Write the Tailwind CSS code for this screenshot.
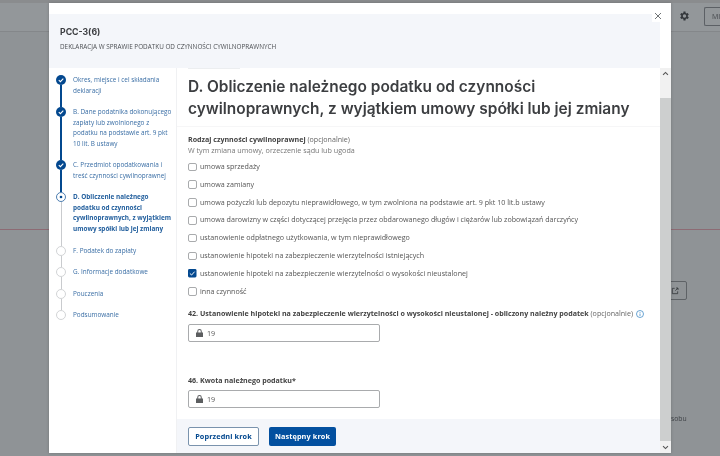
<!doctype html>
<html lang="pl">
<head>
<meta charset="utf-8">
<script src="https://cdn.jsdelivr.net/npm/@tailwindcss/browser@4"></script>
</head>
<body class="m-0 overflow-hidden bg-[#8f9396]">
<div class="relative h-[456px] w-[720px] overflow-hidden bg-[#8f9396] font-['Open_Sans',sans-serif] blur-[0.3px]">
  <!-- dimmed page behind the dialog -->
  <div class="h-[3px] bg-[#8a8c8e]"></div>
  <div class="flex h-[29px] items-start justify-end border-b border-[#84878a] bg-[#93979a] pt-[4px]">
    <svg class="mr-[14px] mt-[3px] size-[12px]" viewBox="0 0 24 24" fill="#33373b"><path d="M19.4 13a7.6 7.6 0 0 0 0-2l2.1-1.6-2-3.5-2.5 1a7.6 7.6 0 0 0-1.7-1L15 3.2h-4l-.4 2.7a7.6 7.6 0 0 0-1.7 1l-2.5-1-2 3.5L6.5 11a7.6 7.6 0 0 0 0 2l-2.1 1.6 2 3.5 2.5-1a7.6 7.6 0 0 0 1.7 1l.4 2.7h4l.4-2.7a7.6 7.6 0 0 0 1.7-1l2.5 1 2-3.5zM13 15.5a3.5 3.5 0 1 1 0-7 3.5 3.5 0 0 1 0 7z"/></svg>
    <div class="h-[19px] w-[16px] overflow-hidden rounded-l-[2px] border border-r-0 border-[#5c6065] pl-[7px] text-[7px] leading-[17px] text-[#44484c]">MI</div>
  </div>
  <div class="absolute left-0 top-[229px] h-px w-full bg-[#8d6b74]"></div>
  <div class="absolute left-[660px] top-[281px] flex h-[19px] w-[27px] items-center justify-end rounded-[2px] border border-[#5e6266] pr-[7px]">
    <svg class="size-[8px]" viewBox="0 0 24 24" fill="none" stroke="#33373b" stroke-width="2.4"><path d="M11 4H4v16h16v-7M13 11l8-8M15 3h6v6"/></svg>
  </div>
  <div class="absolute left-[671px] top-[414px] text-[6.8px] leading-[10px] text-[#3f4347]">sobu</div>

  <!-- dialog -->
  <div class="absolute left-[49px] top-[3px] flex h-[450px] w-[622px] bg-white pt-[11px] shadow-[0_0_3px_rgba(0,0,0,0.2)]">
    <div class="flex w-[611px] flex-col">
      <header class="h-[54px] shrink-0 bg-[#f4f6fa] pl-[11px] pt-[11px]">
        <h1 class="font-['Inter',sans-serif] text-[8.7px] font-bold leading-[14px] text-[#3b3d40]">PCC-3(6)</h1>
        <p class="mt-[3px] whitespace-nowrap text-[6.37px] leading-[10px] text-[#4d5054]">DEKLARACJA W SPRAWIE PODATKU OD CZYNNOŚCI CYWILNOPRAWNYCH</p>
      </header>
      <div class="flex min-h-0 flex-1">
        <!-- steps -->
        <nav class="w-[128px] shrink-0 border-r border-[#f0f1f3] pl-[7px] pt-[7px] text-[6.4px] leading-[10.7px] text-[#3a6ea5]">
          <ol>
            <li class="flex h-[32px] gap-[7px]">
              <div class="flex w-[10px] flex-col items-center">
                <svg class="size-[10px] shrink-0" viewBox="0 0 10 10"><circle cx="5" cy="5" r="5" fill="#03488f"/><path d="M2.8 5.2 4.4 6.7 7.3 3.7" fill="none" stroke="#fff" stroke-width="1.1"/></svg>
                <div class="w-[1.5px] flex-1 bg-[#03488f]"></div>
              </div>
              <span class="w-[100px]">Okres, miejsce i cel składania deklaracji</span>
            </li>
            <li class="flex h-[53px] gap-[7px]">
              <div class="flex w-[10px] flex-col items-center">
                <svg class="size-[10px] shrink-0" viewBox="0 0 10 10"><circle cx="5" cy="5" r="5" fill="#03488f"/><path d="M2.8 5.2 4.4 6.7 7.3 3.7" fill="none" stroke="#fff" stroke-width="1.1"/></svg>
                <div class="w-[1.5px] flex-1 bg-[#03488f]"></div>
              </div>
              <span class="w-[100px]">B. Dane podatnika dokonującego zapłaty lub zwolnionego z podatku na podstawie art. 9 pkt 10 lit. B ustawy</span>
            </li>
            <li class="flex h-[32px] gap-[7px]">
              <div class="flex w-[10px] flex-col items-center">
                <svg class="size-[10px] shrink-0" viewBox="0 0 10 10"><circle cx="5" cy="5" r="5" fill="#03488f"/><path d="M2.8 5.2 4.4 6.7 7.3 3.7" fill="none" stroke="#fff" stroke-width="1.1"/></svg>
                <div class="w-[1.5px] flex-1 bg-[#03488f]"></div>
              </div>
              <span class="w-[100px]">C. Przedmiot opodatkowania i treść czynności cywilnoprawnej</span>
            </li>
            <li class="flex h-[53.5px] gap-[7px]">
              <div class="flex w-[10px] flex-col items-center">
                <svg class="size-[10px] shrink-0" viewBox="0 0 10 10"><circle cx="5" cy="5" r="4.5" fill="#fff" stroke="#03488f" stroke-width=".7"/><circle cx="5" cy="5" r="1.3" fill="#03488f"/></svg>
                <div class="w-px flex-1 bg-[#c9cbce]"></div>
              </div>
              <span class="w-[100px] font-bold text-[#24609e]">D. Obliczenie należnego podatku od czynności cywilnoprawnych, z wyjątkiem umowy spółki lub jej zmiany</span>
            </li>
            <li class="flex h-[21.5px] gap-[7px]">
              <div class="flex w-[10px] flex-col items-center">
                <div class="size-[10px] shrink-0 rounded-full border border-[#d2d4d6]"></div>
                <div class="w-px flex-1 bg-[#c9cbce]"></div>
              </div>
              <span>F. Podatek do zapłaty</span>
            </li>
            <li class="flex h-[21.5px] gap-[7px]">
              <div class="flex w-[10px] flex-col items-center">
                <div class="size-[10px] shrink-0 rounded-full border border-[#d2d4d6]"></div>
                <div class="w-px flex-1 bg-[#c9cbce]"></div>
              </div>
              <span>G. Informacje dodatkowe</span>
            </li>
            <li class="flex h-[21.5px] gap-[7px]">
              <div class="flex w-[10px] flex-col items-center">
                <div class="size-[10px] shrink-0 rounded-full border border-[#d2d4d6]"></div>
                <div class="w-px flex-1 bg-[#c9cbce]"></div>
              </div>
              <span>Pouczenia</span>
            </li>
            <li class="flex gap-[7px]">
              <div class="size-[10px] shrink-0 rounded-full border border-[#d2d4d6]"></div>
              <span>Podsumowanie</span>
            </li>
          </ol>
        </nav>
        <!-- step content -->
        <main class="flex min-w-0 flex-1 flex-col">
          <div class="min-h-0 flex-1">
            <div class="ml-[11px] h-px w-[52px] bg-[#eceef0]"></div>
            <h2 class="mt-[7px] h-[51px] whitespace-nowrap border-b border-[#f6f6f7] pl-[11px] font-['Inter',sans-serif] text-[15.45px] font-semibold leading-[22px] text-[#3c3e41]">D. Obliczenie należnego podatku od czynności<br>cywilnoprawnych, z wyjątkiem umowy spółki lub jej zmiany</h2>
            <div class="pl-[11px]">
              <p class="mt-[7px] text-[7.1px] leading-[11px] text-[#444]"><b class="font-bold">Rodzaj czynności cywilnoprawnej</b> <span class="text-[#666]">(opcjonalnie)</span></p>
              <p class="text-[7.2px] leading-[10px] text-[#777]">W tym zmiana umowy, orzeczenie sądu lub ugoda</p>
              <div class="mt-[3px] flex flex-col text-[7.13px] leading-[17.8px] text-[#555]">
                <label class="flex h-[17.8px] items-center gap-[3.5px]"><span class="size-[8.5px] rounded-[2px] border border-[#a9abad]"></span>umowa sprzedaży</label>
                <label class="flex h-[17.8px] items-center gap-[3.5px]"><span class="size-[8.5px] rounded-[2px] border border-[#a9abad]"></span>umowa zamiany</label>
                <label class="flex h-[17.8px] items-center gap-[3.5px]"><span class="size-[8.5px] rounded-[2px] border border-[#a9abad]"></span>umowa pożyczki lub depozytu nieprawidłowego, w tym zwolniona na podstawie art. 9 pkt 10 lit.b ustawy</label>
                <label class="flex h-[17.8px] items-center gap-[3.5px]"><span class="size-[8.5px] rounded-[2px] border border-[#a9abad]"></span>umowa darowizny w części dotyczącej przejęcia przez obdarowanego długów i ciężarów lub zobowiązań darczyńcy</label>
                <label class="flex h-[17.8px] items-center gap-[3.5px]"><span class="size-[8.5px] rounded-[2px] border border-[#a9abad]"></span>ustanowienie odpłatnego użytkowania, w tym nieprawidłowego</label>
                <label class="flex h-[17.8px] items-center gap-[3.5px]"><span class="size-[8.5px] rounded-[2px] border border-[#a9abad]"></span>ustanowienie hipoteki na zabezpieczenie wierzytelności istniejących</label>
                <label class="flex h-[17.8px] items-center gap-[3.5px]"><svg class="size-[8.5px]" viewBox="0 0 9 9"><rect width="9" height="9" rx="1.5" fill="#03488f"/><path d="M2 4.7 3.8 6.4 7 2.8" fill="none" stroke="#fff" stroke-width="1"/></svg>ustanowienie hipoteki na zabezpieczenie wierzytelności o wysokości nieustalonej</label>
                <label class="flex h-[17.8px] items-center gap-[3.5px]"><span class="size-[8.5px] rounded-[2px] border border-[#a9abad]"></span>inna czynność</label>
              </div>
              <p class="mt-[8px] flex items-center gap-[3px] whitespace-nowrap text-[7.1px] leading-[11px] text-[#444]"><span><b class="font-bold">42. Ustanowienie hipoteki na zabezpieczenie wierzytelności o wysokości nieustalonej - obliczony należny podatek</b> <span class="text-[#666]">(opcjonalnie)</span></span>
                <svg class="size-[8px]" viewBox="0 0 16 16" fill="none" stroke="#2c7fc1" stroke-width="1.4"><circle cx="8" cy="8" r="7"/><path d="M8 7v5M8 4v1.6"/></svg>
              </p>
              <div class="mt-[5px] flex h-[18px] w-[192px] items-center gap-[4px] rounded-[2px] border border-[#a9abad] pl-[7px] text-[7.13px] text-[#555]">
                <svg class="h-[8px] w-[7px]" viewBox="0 0 14 16" fill="#5c5e60"><path d="M0 7h14v9H0zM2.5 7V4.5a4.5 4.5 0 0 1 9 0V7H9.5V4.5a2.5 2.5 0 0 0-5 0V7z"/></svg>19
              </div>
              <p class="mt-[33px] text-[7.1px] font-bold leading-[11px] text-[#444]">46. Kwota należnego podatku*</p>
              <div class="mt-[4px] flex h-[18px] w-[192px] items-center gap-[4px] rounded-[2px] border border-[#a9abad] pl-[7px] text-[7.13px] text-[#555]">
                <svg class="h-[8px] w-[7px]" viewBox="0 0 14 16" fill="#5c5e60"><path d="M0 7h14v9H0zM2.5 7V4.5a4.5 4.5 0 0 1 9 0V7H9.5V4.5a2.5 2.5 0 0 0-5 0V7z"/></svg>19
              </div>
            </div>
          </div>
          <footer class="flex h-[34.5px] shrink-0 items-start gap-[10px] bg-[#f4f6fa] pl-[11px] pt-[8px]">
            <button class="h-[19px] w-[71px] rounded-[2px] border border-[#7a93ad] bg-white text-[7.3px] font-bold tracking-[0.1px] text-[#03488f]">Poprzedni krok</button>
            <button class="h-[19px] w-[67px] rounded-[2px] bg-[#03509f] text-[7.3px] font-bold tracking-[0.1px] text-white">Następny krok</button>
          </footer>
        </main>
      </div>
    </div>
    <!-- scrollbar -->
    <div class="flex w-[11px] flex-col">
      <div class="h-[54px]"></div>
      <div class="flex h-[30px] justify-center bg-[#f1f1f1] pt-[2px]">
        <svg class="size-[7px]" viewBox="0 0 10 10" fill="none" stroke="#555" stroke-width="1.6"><path d="M1.5 7 5 3.5 8.5 7"/></svg>
      </div>
      <div class="flex-1 bg-[#cdcfcf]"></div>
      <div class="flex h-[12px] justify-center bg-[#f1f1f1] pt-[3px]">
        <svg class="size-[7px]" viewBox="0 0 10 10" fill="none" stroke="#555" stroke-width="1.6"><path d="M1.5 3 5 6.5 8.5 3"/></svg>
      </div>
    </div>
    <button class="absolute left-[603px] top-[7px] flex size-[12px] items-center justify-center bg-white" aria-label="Zamknij">
      <svg class="size-[8px]" viewBox="0 0 8 8" stroke="#606467" stroke-width=".9"><path d="M1 1l6 6M7 1l-6 6"/></svg>
    </button>
  </div>
</div>
</body>
</html>
